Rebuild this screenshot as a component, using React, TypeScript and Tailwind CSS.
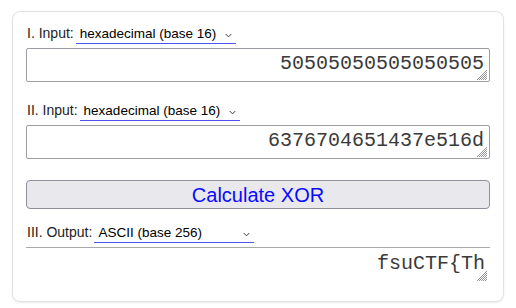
import React, { useState } from 'react';

const sans = "font-['Liberation_Sans',Arial,sans-serif]";
const mono = "font-['Liberation_Mono','Courier_New',monospace]";

function Chevron({ className = '' }: { className?: string }) {
  return (
    <svg viewBox="0 0 8 5" className={`absolute w-[7px] h-[5px] pointer-events-none ${className}`} fill="none" stroke="#333" strokeWidth="1.1">
      <path d="M0.8 0.8L4 4L7.2 0.8" />
    </svg>
  );
}

function Grip() {
  return (
    <svg viewBox="0 0 12 12" className="absolute right-[2px] bottom-[1px] w-[12px] h-[12px] pointer-events-none" stroke="#8a8a8a" strokeWidth="0.9">
      <path d="M11 3L3 11M11 5L5 11M11 7L7 11M11 9L9 11M11 1L1 11" />
    </svg>
  );
}

function BaseSelect({ label, value, options, onChange }: { label: string; value: string; options: string[]; onChange: (v: string) => void }) {
  return (
    <div className={`flex items-baseline h-[20px] ${sans} text-[#1c1c1c]`}>
      <span className="pl-[1px] pr-[2px] text-[14px] leading-[18px]">{label}</span>
      <div className="relative w-[160px]">
        <select
          value={value}
          onChange={(e) => onChange(e.target.value)}
          className={`block appearance-none w-full bg-transparent border-0 border-b-[1.5px] border-[#4c55f0] pl-[4px] pr-[14px] pt-0 pb-[1px] ${sans} text-[13.5px] leading-[16px] text-black outline-none`}
        >
          {options.map((o) => (
            <option key={o}>{o}</option>
          ))}
        </select>
        <Chevron className="right-[4px] top-[7px]" />
      </div>
    </div>
  );
}

const bases = ['binary (base 2)', 'decimal (base 10)', 'hexadecimal (base 16)', 'ASCII (base 256)'];

const areaClass = `block w-full resize-none bg-white text-right ${mono} text-[20px] leading-[24px] text-[#3a3a3a] pr-[5px] overflow-hidden outline-none`;

export default function App() {
  const [a, setA] = useState('50505050505050505');
  const [b, setB] = useState('6376704651437e516d');
  const [baseA, setBaseA] = useState(bases[2]);
  const [baseB, setBaseB] = useState(bases[2]);
  const [baseOut, setBaseOut] = useState(bases[3]);

  return (
    <div className="bg-white w-[516px] h-[308px] pt-[11px] pl-[12px]">
      <div className="w-[492px] h-[291px] bg-white border border-[#e2e2e2] rounded-[8px] shadow-[0_1px_2px_rgba(0,0,0,0.08)] px-[13px] pt-[12px]">
        <BaseSelect label="I. Input:" value={baseA} options={bases} onChange={setBaseA} />
        <div className="relative mt-[4px]">
          <textarea
            value={a}
            onChange={(e) => setA(e.target.value)}
            className={`${areaClass} h-[34px] border border-[#9c9ca6] rounded-[2px] pt-[3px]`}
          />
          <Grip />
        </div>

        <div className="mt-[19px]">
          <BaseSelect label="II. Input:" value={baseB} options={bases} onChange={setBaseB} />
        </div>
        <div className="relative mt-[4px]">
          <textarea
            value={b}
            onChange={(e) => setB(e.target.value)}
            className={`${areaClass} h-[34px] border border-[#9c9ca6] rounded-[2px] pt-[3px]`}
          />
          <Grip />
        </div>

        <button className={`block w-full h-[29px] mt-[21px] bg-[#e9e9ed] border border-[#8f8f9d] rounded-[4px] ${sans} text-[20px] leading-none text-[#0a0aff]`}>
          Calculate XOR
        </button>

        <div className="mt-[14px]">
          <BaseSelect label="III. Output:" value={baseOut} options={bases} onChange={setBaseOut} />
        </div>
        <div className="relative mt-[4px]">
          <textarea
            readOnly
            value="fsuCTF{Th"
            className={`${areaClass} h-[36px] border-0 border-t border-[#a8a8a8] pt-[4px]`}
          />
          <Grip />
        </div>
      </div>
    </div>
  );
}
